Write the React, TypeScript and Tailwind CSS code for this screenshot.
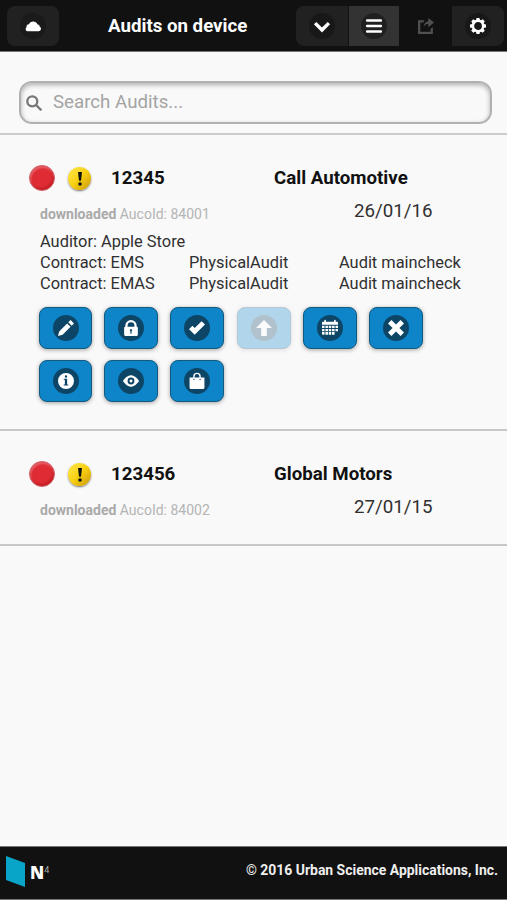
import type { ReactNode } from "react";
import clsx from "clsx";

type IconName =
  | "cloud"
  | "carat"
  | "bars"
  | "action"
  | "gear"
  | "edit"
  | "lock"
  | "check"
  | "arrowUp"
  | "calendar"
  | "delete"
  | "info"
  | "eye"
  | "shop";

const ICONS: Record<IconName, ReactNode> = {
  cloud: (
    <path d="M14 9.500c0-.8-.5-1.500-1.100-1.800a2.200 2.200 0 0 0-2.100-2.200A3.900 3.900 0 0 0 3.500 5.500 2.300 2.300 0 0 0 1.300 8 2 2 0 0 0 2 11.500h10a2 2 0 0 0 2-2z" />
  ),
  carat: <path d="M11.95 3.4 7 8.35 2.05 3.4-.07 5.53 7 12.6l7.07-7.07z" />,
  bars: (
    <path d="M1 3.200h12a1 1 0 0 0 0-2.200H1a1 1 0 0 0 0 2.200zM1 8.100h12a1 1 0 0 0 0-2.200H1a1 1 0 0 0 0 2.200zM1 13h12a1 1 0 0 0 0-2.200H1A1 1 0 0 0 1 13z" />
  ),
  action: (
    <path d="M9 5v3l5-4-5-4v3S5 3 5 8c0 0 1-3 4-3zM11 12H2V4h2.500l1.300-2H0v12h13V8l-2 1.500z" />
  ),
  gear: (
    <>
      <circle
        cx="7"
        cy="7"
        r="4.500"
        className="fill-none stroke-current stroke-[2.200]"
      />
      <path d="M5.700 0h2.600l.5 2.200H5.200zM5.700 14h2.600l.5-2.200H5.200zM0 5.700v2.600l2.200.5V5.200zM14 5.700v2.600l-2.200.5V5.200zM1.100 2.900l1.800-1.800 1.900 1.200-2.500 2.500zM12.900 2.900l-1.800-1.800-1.900 1.200 2.500 2.500zM1.100 11.100l1.800 1.800 1.900-1.200-2.500-2.500zM12.900 11.100l-1.800 1.800-1.900-1.200 2.500-2.500z" />
    </>
  ),
  edit: <path d="m1 10-1 4 4-1 7-7-3-3zM11 0 9 2l3 3 2-2z" />,
  lock: (
    <path
      fillRule="evenodd"
      d="M12 6V5A5 5 0 0 0 2 5v1a1 1 0 0 0-1 1v6a1 1 0 0 0 1 1h10a1 1 0 0 0 1-1V7a1 1 0 0 0-1-1zM7.500 9.850V12h-1V9.850A1 1 0 1 1 7.500 9.850zM10 6H4V5a3 3 0 0 1 6 0z"
    />
  ),
  check: <path d="m14 4-3-3-6 6-2-2-3 3 5 5z" />,
  arrowUp: <path d="M7 0 0 7h4.500v7h5V7H14z" />,
  calendar: (
    <>
      <path d="M0 4.200V2.500a1 1 0 0 1 1-1h1V.5a.7.7 0 0 1 1.400 0v1h7.200v-1a.7.7 0 0 1 1.400 0v1h1a1 1 0 0 1 1 1v1.700z" />
      <path d="M0 5h2.200v2H0zM3 5h2.200v2H3zM5.900 5h2.200v2H5.900zM8.800 5H11v2H8.800zM11.800 5H14v2h-2.200zM0 7.800h2.200v2H0zM3 7.800h2.200v2H3zM5.900 7.800h2.200v2H5.900zM8.800 7.800H11v2H8.800zM11.800 7.800H14v2h-2.200zM0 10.600h2.200v2.400H1a1 1 0 0 1-1-1zM3 10.600h2.200V13H3zM5.900 10.600h2.200V13H5.900zM8.800 10.600H11V13H8.800z" />
    </>
  ),
  delete: <path d="m14 3-3-3-4 4-4-4-3 3 4 4-4 4 3 3 4-4 4 4 3-3-4-4z" />,
  info: (
    <path
      fillRule="evenodd"
      d="M7 0a7 7 0 1 0 0 14A7 7 0 0 0 7 0zM7 2a1 1 0 1 1 0 2.100A1 1 0 0 1 7 2zm2 9H5v-1h1V6H5V5h3v5h1z"
    />
  ),
  eye: (
    <path
      fillRule="evenodd"
      d="M7 2C3 2 0 7 0 7s3 5 7 5 7-5 7-5-3-5-7-5zm0 8a3 3 0 1 1 0-6 3 3 0 0 1 0 6zM7 5.700a1.300 1.300 0 1 0 0 2.600 1.300 1.300 0 0 0 0-2.600z"
    />
  ),
  shop: (
    <path
      fillRule="evenodd"
      d="M10.300 4V3a3.300 3.300 0 0 0-6.600 0v1H.5v9a1 1 0 0 0 1 1h11a1 1 0 0 0 1-1V4zM4.900 3a2.100 2.100 0 0 1 4.200 0v1H4.900zm-.6 3.200a.6.6 0 1 1 0-1.200.6.6 0 0 1 0 1.200zm5.400 0a.6.6 0 1 1 0-1.200.6.6 0 0 1 0 1.200z"
    />
  ),
};

interface DiscIconProps {
  name: IconName;
  className: string;
}

function DiscIcon({ name, className }: DiscIconProps) {
  return (
    <span
      className={clsx(
        "flex size-[26px] items-center justify-center rounded-full",
        className
      )}
    >
      <svg viewBox="0 0 14 14" className="size-4 overflow-visible fill-current">
        {ICONS[name]}
      </svg>
    </span>
  );
}

interface ActionButtonProps {
  name: IconName;
  disabled?: boolean;
}

function ActionButton({ name, disabled }: ActionButtonProps) {
  return (
    <button
      disabled={disabled}
      className={clsx(
        "flex h-[42px] items-center justify-center rounded-[8px] border-[1.5px] border-[#135a80] bg-[#0e85c8] pb-px shadow-[0_1px_4px_rgba(0,0,0,0.35)]",
        disabled && "opacity-30"
      )}
    >
      <DiscIcon name={name} className="bg-[#0d4567] text-white" />
    </button>
  );
}

function Header() {
  return (
    <header className="flex h-[52px] items-start border-b border-[#777] bg-[#111] pt-[6px]">
      <button className="ml-[7px] flex h-10 w-[52px] items-center justify-center rounded-[8px] bg-[#212121] text-white">
        <DiscIcon name="cloud" className="bg-[#1a1a1a]" />
      </button>
      <h1 className="ml-[49px] w-[188px] text-[18.7px] leading-[40px] font-bold whitespace-nowrap text-white">
        Audits on device
      </h1>
      <div className="flex h-10 overflow-hidden rounded-[8px] text-white">
        <button className="flex w-[52px] items-center justify-center bg-[#212121]">
          <DiscIcon name="carat" className="bg-[#181818]" />
        </button>
        <button className="ml-px flex w-[50px] items-center justify-center bg-[#333]">
          <DiscIcon name="bars" className="bg-[#202020]" />
        </button>
        <button className="flex w-[53px] items-center justify-center text-[#505050]">
          <DiscIcon name="action" className="bg-[#111]" />
        </button>
        <button className="flex w-[52px] items-center justify-center bg-[#212121]">
          <DiscIcon name="gear" className="bg-[#181818]" />
        </button>
      </div>
    </header>
  );
}

function SearchBar() {
  return (
    <div className="h-[83px] border-b-2 border-[#ccc] pt-[29px] pr-[15px] pl-[19px]">
      <div className="flex h-[43px] items-center rounded-[13px] border-2 border-[#b1b1b1] pl-[5px] shadow-[inset_0_2px_5px_rgba(0,0,0,0.3)]">
        <svg
          viewBox="0 0 16 16"
          className="size-4 fill-none stroke-[#777] stroke-[2.300]"
        >
          <circle cx="6.300" cy="6.300" r="5" />
          <path d="m10 10 5.300 5.300" />
        </svg>
        <span className="ml-[11px] text-[18.7px] text-[#a4a4a4]">
          Search Audits...
        </span>
      </div>
    </div>
  );
}

interface AuditItemProps {
  number: string;
  dealer: string;
  date: string;
  aucoId: string;
  children?: ReactNode;
}

function AuditItem({ number, dealer, date, aucoId, children }: AuditItemProps) {
  return (
    <section className="border-b-2 border-[#c7c7c7]">
      <div className="flex h-[54px] items-end pl-[29px] text-[18.7px] leading-[22px] font-bold text-[#111]">
        <span className="mb-[-2px] size-[26px] rounded-full border border-[#d5626a] bg-[#de2b34] shadow-[inset_1px_2px_2px_rgba(255,255,255,0.25),inset_-1px_-2px_2px_rgba(120,0,0,0.3)]" />
        <span className="mb-[-1px] ml-[13px] flex size-[23px] items-center justify-center rounded-full bg-linear-to-br from-[#ffea45] via-[#f7cf0d] to-[#c9980c] shadow-[0_1px_2px_rgba(0,0,0,0.5)]">
          <svg viewBox="0 0 6 14" className="h-[14px] w-[6px] fill-[#111]">
            <path d="M1 0h4L4 8.800H2z" />
            <circle cx="3" cy="12" r="1.800" />
          </svg>
        </span>
        <span className="ml-[20px] w-[163px]">{number}</span>
        <span className="whitespace-nowrap">{dealer}</span>
      </div>
      <div className="flex h-[42px] pl-10">
        <p className="w-[314px] pt-4 text-[14px] leading-[18px] text-[#b4b4b4]">
          <b className="text-[#aaa]">downloaded</b> AucoId: {aucoId}
        </p>
        <span className="pt-[11px] text-[18.7px] leading-[22px] text-[#303030]">
          {date}
        </span>
      </div>
      {children}
    </section>
  );
}

const CONTRACTS = ["EMS", "EMAS"];

const ACTIONS: ActionButtonProps[] = [
  { name: "edit" },
  { name: "lock" },
  { name: "check" },
  { name: "arrowUp", disabled: true },
  { name: "calendar" },
  { name: "delete" },
  { name: "info" },
  { name: "eye" },
  { name: "shop" },
];

export default function App() {
  return (
    <div className="flex h-[900px] w-[507px] flex-col overflow-hidden bg-[#f9f9f9] font-['Roboto',sans-serif]">
      <Header />
      <SearchBar />
      <main className="flex-1">
        <AuditItem
          number="12345"
          dealer="Call Automotive"
          date="26/01/16"
          aucoId="84001"
        >
          <div className="h-[198px]">
            <div className="pl-10 text-[16.4px] leading-[21px] text-[#303030]">
              <p>Auditor: Apple Store</p>
              {CONTRACTS.map((contract) => (
                <div key={contract} className="flex">
                  <span className="w-[149px]">Contract: {contract}</span>
                  <span className="w-[150px]">PhysicalAudit</span>
                  <span>Audit maincheck</span>
                </div>
              ))}
            </div>
            <div className="mt-[13px] grid grid-cols-[53px_repeat(5,54px)] gap-x-[12.2px] gap-y-[11px] pl-[39px]">
              {ACTIONS.map((action) => (
                <ActionButton key={action.name} {...action} />
              ))}
            </div>
          </div>
        </AuditItem>
        <AuditItem
          number="123456"
          dealer="Global Motors"
          date="27/01/15"
          aucoId="84002"
        >
          <div className="h-[17px]" />
        </AuditItem>
      </main>
      <footer className="flex h-[54px] items-start border-t border-b border-[#777] bg-[#111] text-white">
        <svg viewBox="0 0 20 32" className="mt-[9px] ml-[6px] h-8 w-5">
          <path d="M0 0 19 7v24L0 24z" className="fill-[#08a5c8]" />
        </svg>
        <span className="mt-[15px] ml-[4px] font-['Open_Sans',sans-serif] text-[17px] leading-[22px] font-extrabold">
          N
        </span>
        <span className="mt-[15px] text-[9px] leading-[16px] text-[#aaa]">
          4
        </span>
        <span className="mt-[14px] mr-[9px] ml-auto text-[13.95px] leading-[18px] font-bold text-[#eee]">
          © 2016 Urban Science Applications, Inc.
        </span>
      </footer>
    </div>
  );
}
